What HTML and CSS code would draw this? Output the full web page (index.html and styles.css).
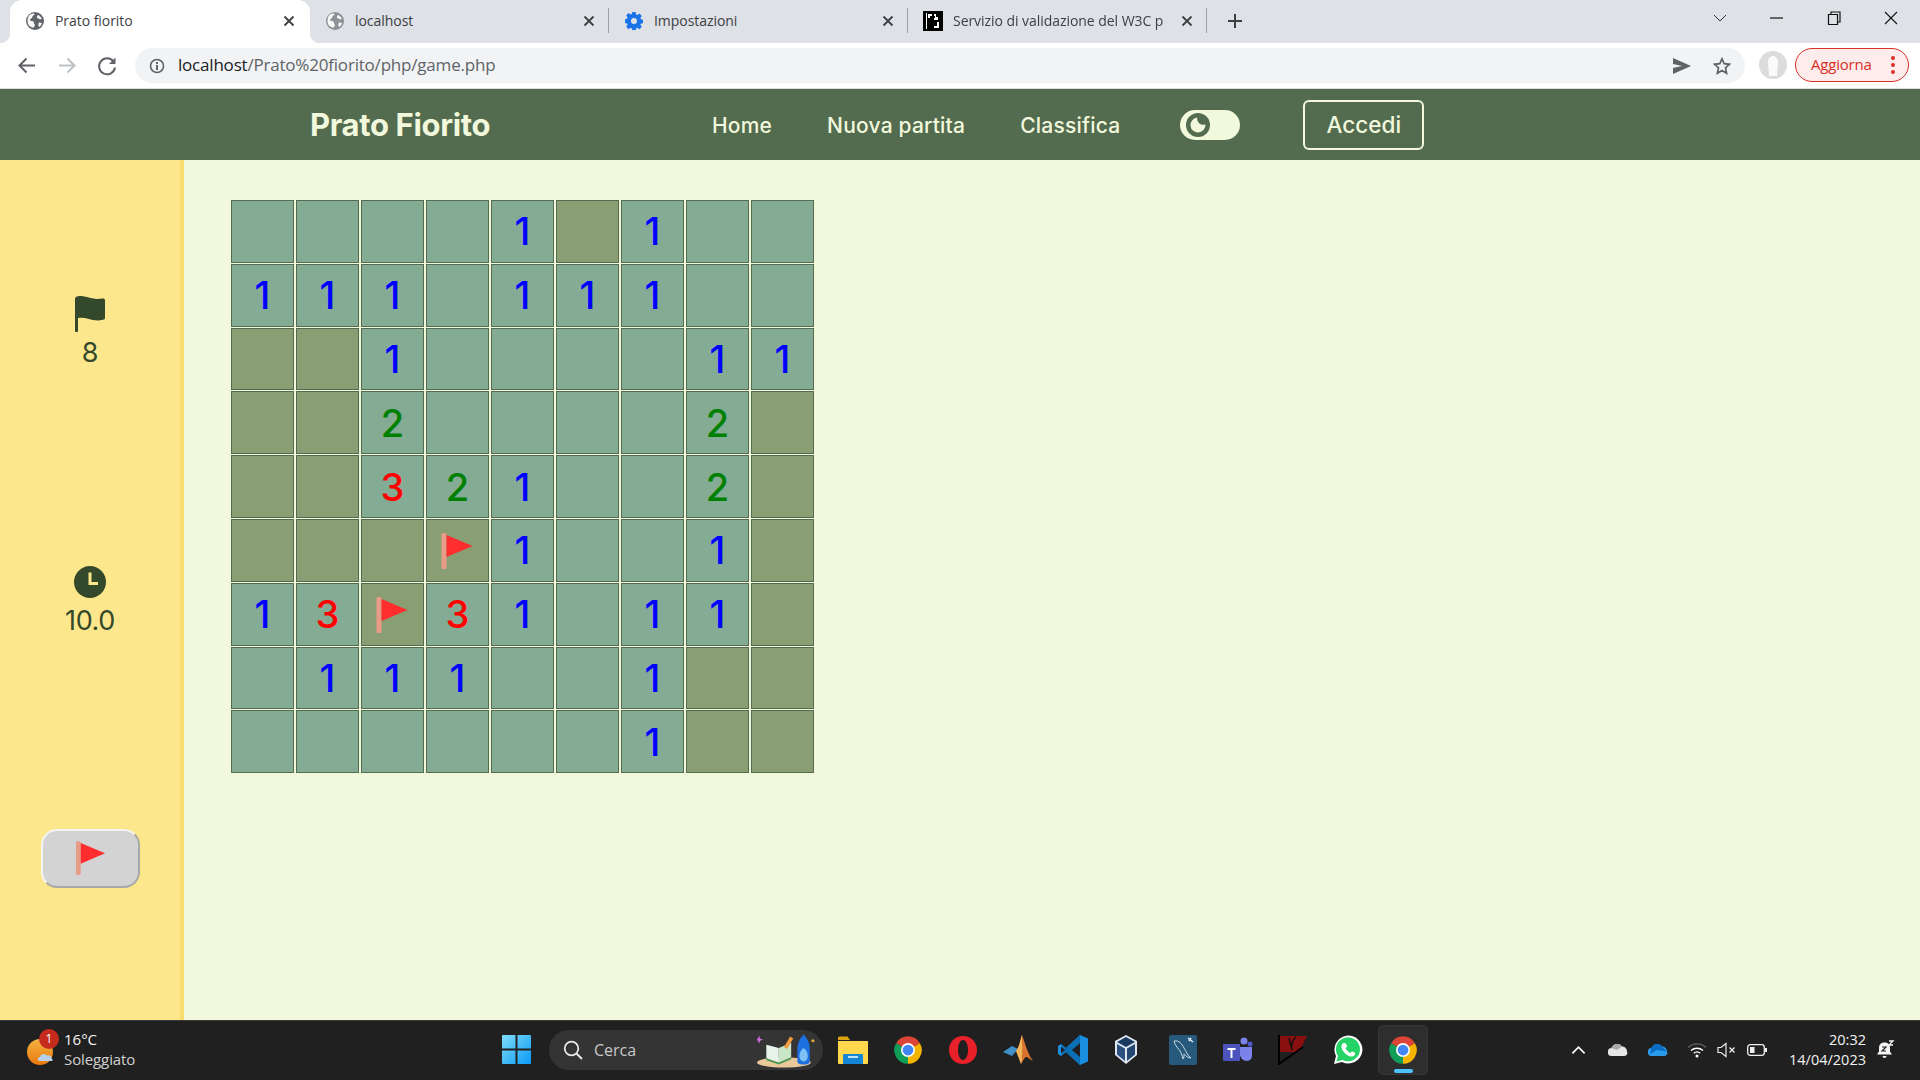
FILE: index.html
```html
<!DOCTYPE html>
<html lang="it">
<head>
<meta charset="utf-8">
<title>Prato fiorito</title>
<link rel="stylesheet" href="styles.css">
</head>
<body>
<svg class="defs" width="0" height="0" aria-hidden="true">
  <defs>
    <symbol id="globe" viewBox="0 0 18 18"><circle cx="9" cy="9" r="9"/><path fill="#fff" fill-opacity=".95" d="M3 3.500c1.500-1.500 3.500-2 5.500-2 0 1.200-.8 2-1.800 2.500-.5.8-.2 1.600-1 2.200-.8.600-1.700.6-1.700 1.500 0 1 1.300 1.300 2.300 1.300 1 .1 1.500.8 1.500 1.600 0 1 1 1.400 1 2.300 0 .9-.4 1.500-1 2.600C4 15.500 1.500 12.800 1.500 9c0-2 .5-4 1.500-5.500zM12 3c1.500.5 3 2 3.800 4-1 .5-2.300.2-3-.3-.8-.6-1.500-.4-1.800-1.200-.2-1 .3-1.800 1-2.500zM13.500 10.500c1 0 1.800.2 2.500.5-.4 1.800-1.400 3.200-2.800 4-.7-.8-1-1.800-.7-3 .1-.8.2-1.500 1-1.500z"/></symbol>
    <symbol id="close" viewBox="0 0 12 12"><path d="M1.500 1.500l9 9M10.500 1.500l-9 9" fill="none" stroke="currentColor" stroke-width="1.800"/></symbol>
    <symbol id="pennant" viewBox="0 0 32 36"><rect x="0" y="0" width="5" height="36" rx="1.500" fill="#e89c88"/><path d="M5 2l26 11L5 24z" fill="#ff2d2d"/></symbol>
    <symbol id="chrome" viewBox="0 0 24 24"><path fill="#db4437" d="M12 12L21.530 6.500A11 11 0 0 0 2.470 6.500z"/><path fill="#f4b400" d="M12 12L12 23A11 11 0 0 0 21.530 6.500z"/><path fill="#0f9d58" d="M12 12L2.470 6.500A11 11 0 0 0 12 23z"/><circle cx="12" cy="12" r="5.600" fill="#fff"/><circle cx="12" cy="12" r="4.300" fill="#4285f4"/></symbol>
  </defs>
</svg>

<div class="tabstrip">
  <div class="tab tab-active">
    <svg class="tab-icon globe-dark"><use href="#globe"/></svg>
    <span class="tab-title">Prato fiorito</span>
    <svg class="tab-close"><use href="#close"/></svg>
  </div>
  <div class="tab">
    <svg class="tab-icon globe-light"><use href="#globe"/></svg>
    <span class="tab-title">localhost</span>
    <svg class="tab-close"><use href="#close"/></svg>
  </div>
  <span class="tab-sep"></span>
  <div class="tab">
    <svg class="tab-icon" viewBox="0 0 18 18"><path fill="#1a73e8" fill-rule="evenodd" d="M7.300 0h3.400l.4 2.400 1.300.6 2-1.400 2.400 2.400-1.400 2 .6 1.300 2.400.4v3.400l-2.400.4-.6 1.300 1.400 2-2.400 2.400-2-1.400-1.300.6-.4 2.400H7.300l-.4-2.400-1.300-.6-2 1.400-2.400-2.400 1.400-2-.6-1.300L-.4 10.800V7.200l2.400-.4.6-1.300-1.400-2 2.400-2.400 2 1.400 1.300-.6zM9 6a3 3 0 1 0 0 6 3 3 0 0 0 0-6z"/></svg>
    <span class="tab-title">Impostazioni</span>
    <svg class="tab-close"><use href="#close"/></svg>
  </div>
  <span class="tab-sep"></span>
  <div class="tab">
    <svg class="tab-icon tab-icon-w3c" viewBox="0 0 20 20"><rect width="20" height="20" fill="#000"/><path fill="#fff" d="M5 3h4v2H7v2H5zM11 3h2v3h2v3h-4V7h1V5h-1zM14 11h2v6h-5v-2h3z"/><path fill="#fff" d="M3 2h1v16H3z"/></svg>
    <span class="tab-title tab-title-fade">Servizio di validazione del W3C p</span>
    <svg class="tab-close"><use href="#close"/></svg>
  </div>
  <span class="tab-sep"></span>
  <svg class="new-tab" viewBox="0 0 16 16"><path d="M8 1v14M1 8h14" stroke="#3c4043" stroke-width="2" fill="none"/></svg>
  <div class="win-controls">
    <svg class="win-ctl" viewBox="0 0 14 14"><path d="M1 4l6 6 6-6" fill="none" stroke="#333" stroke-width="1"/></svg>
    <svg class="win-ctl" viewBox="0 0 14 14"><path d="M0 7h13" stroke="#111" stroke-width="1.200"/></svg>
    <svg class="win-ctl" viewBox="0 0 14 14"><path d="M1.500 3.500h9v10h-9zM4 3.500V1h9v10h-2.500" fill="none" stroke="#111" stroke-width="1.200"/></svg>
    <svg class="win-ctl" viewBox="0 0 14 14"><path d="M1 1l12 12M13 1L1 13" stroke="#111" stroke-width="1.100"/></svg>
  </div>
</div>

<div class="toolbar">
  <svg class="tool-btn" viewBox="0 0 40 20"><path d="M28 10H13M19.500 3L12.500 10l7 7" fill="none" stroke="#5f6368" stroke-width="2"/></svg>
  <svg class="tool-btn" viewBox="0 0 40 20"><path d="M12 10h15M20.500 3l7 7-7 7" fill="none" stroke="#bdc1c6" stroke-width="2"/></svg>
  <svg class="tool-btn" viewBox="0 0 40 20"><path d="M26.500 6A8 8 0 1 0 28 12" fill="none" stroke="#5f6368" stroke-width="2"/><path d="M28.500 2v6.500H22z" fill="#5f6368"/></svg>
  <div class="omnibox">
    <svg class="info" viewBox="0 0 16 16"><circle cx="8" cy="8" r="6.500" fill="none" stroke="#5f6368" stroke-width="1.600"/><path d="M7 4h2v2H7zM7 7h2v5H7z" fill="#5f6368"/></svg>
    <span class="url"><span class="url-host">localhost</span>/Prato%20fiorito/php/game.php</span>
    <svg class="omni-icon send" viewBox="0 0 18 18"><path d="M0 1l18 8-18 8 0-6 9-2-9-2z" fill="#5f6368"/></svg>
    <svg class="omni-icon star" viewBox="0 0 18 18"><path d="M9 1.800l2.200 4.900 5.300.6-4 3.600 1.100 5.300L9 13.500l-4.600 2.700 1.100-5.300-4-3.600 5.300-.6z" fill="none" stroke="#5f6368" stroke-width="1.700"/></svg>
  </div>
  <svg class="avatar" viewBox="0 0 28 28"><circle cx="14" cy="14" r="14" fill="#dcdcdc"/><path d="M9 12c0-5 2.500-7 5-7s5 2 5 7c0 5-1 9-1 13h-8c0-4-1-8-1-13z" fill="#fafafa"/></svg>
  <div class="update-pill"><span class="update-text">Aggiorna</span><span class="update-dots"><i></i><i></i><i></i></span></div>
</div>

<header class="site-header">
  <div class="logo">Prato Fiorito</div>
  <nav class="nav">
    <a class="nav-link">Home</a>
    <a class="nav-link">Nuova partita</a>
    <a class="nav-link">Classifica</a>
  </nav>
  <div class="toggle">
    <svg class="toggle-knob" viewBox="0 0 24 24"><circle cx="12" cy="12" r="12" fill="#536b4f"/><path d="M12 4.500a7.500 7.500 0 1 0 7.500 7.500 6 6 0 0 1-7.500-7.500z" fill="#f2f8dc" transform="rotate(-5 12 12)"/></svg>
  </div>
  <a class="login">Accedi</a>
</header>

<div class="page">
  <aside class="sidebar">
    <div class="stat stat-flags">
      <svg class="stat-flag" viewBox="0 0 30 36"><path fill="#34492b" d="M0 3c0-1.500 1-2.500 2-2.500 3-1 6-.5 10 .6 5 1.300 9 2.500 15 1.400 1.500-.3 3 .3 3 1.500v18c0 1-1 1.600-2 1.800-6 1.300-10 .2-15-1.100-3.500-.9-7-1.300-10-.6V35c0 .6-.5 1-1 1H1c-.6 0-1-.4-1-1z"/></svg>
      <div class="stat-value">8</div>
    </div>
    <div class="stat stat-time">
      <svg class="stat-clock" viewBox="0 0 32 32"><circle cx="16" cy="16" r="16" fill="#34492b"/><path d="M16 6.500v11h8" fill="none" stroke="#fde78d" stroke-width="3"/></svg>
      <div class="stat-value stat-value-time">10.0</div>
    </div>
    <button class="flag-btn"><svg class="flag-btn-icon"><use href="#pennant"/></svg></button>
  </aside>

  <main class="board-area">
    <div class="board">
      <div class="cell"></div><div class="cell"></div><div class="cell"></div><div class="cell"></div><div class="cell n1">1</div><div class="cell hidden"></div><div class="cell n1">1</div><div class="cell"></div><div class="cell"></div>
      <div class="cell n1">1</div><div class="cell n1">1</div><div class="cell n1">1</div><div class="cell"></div><div class="cell n1">1</div><div class="cell n1">1</div><div class="cell n1">1</div><div class="cell"></div><div class="cell"></div>
      <div class="cell hidden"></div><div class="cell hidden"></div><div class="cell n1">1</div><div class="cell"></div><div class="cell"></div><div class="cell"></div><div class="cell"></div><div class="cell n1">1</div><div class="cell n1">1</div>
      <div class="cell hidden"></div><div class="cell hidden"></div><div class="cell n2">2</div><div class="cell"></div><div class="cell"></div><div class="cell"></div><div class="cell"></div><div class="cell n2">2</div><div class="cell hidden"></div>
      <div class="cell hidden"></div><div class="cell hidden"></div><div class="cell n3">3</div><div class="cell n2">2</div><div class="cell n1">1</div><div class="cell"></div><div class="cell"></div><div class="cell n2">2</div><div class="cell hidden"></div>
      <div class="cell hidden"></div><div class="cell hidden"></div><div class="cell hidden"></div><div class="cell hidden"><svg class="cell-flag"><use href="#pennant"/></svg></div><div class="cell n1">1</div><div class="cell"></div><div class="cell"></div><div class="cell n1">1</div><div class="cell hidden"></div>
      <div class="cell n1">1</div><div class="cell n3">3</div><div class="cell hidden"><svg class="cell-flag"><use href="#pennant"/></svg></div><div class="cell n3">3</div><div class="cell n1">1</div><div class="cell"></div><div class="cell n1">1</div><div class="cell n1">1</div><div class="cell hidden"></div>
      <div class="cell"></div><div class="cell n1">1</div><div class="cell n1">1</div><div class="cell n1">1</div><div class="cell"></div><div class="cell"></div><div class="cell n1">1</div><div class="cell hidden"></div><div class="cell hidden"></div>
      <div class="cell"></div><div class="cell"></div><div class="cell"></div><div class="cell"></div><div class="cell"></div><div class="cell"></div><div class="cell n1">1</div><div class="cell hidden"></div><div class="cell hidden"></div>
    </div>
  </main>
</div>

<footer class="taskbar">
  <div class="weather">
    <div class="weather-icon">
      <svg class="weather-svg" viewBox="0 0 30 30"><defs><linearGradient id="sun" x1="0" y1="0" x2="0" y2="1"><stop offset="0" stop-color="#f5b342"/><stop offset="1" stop-color="#e8780f"/></linearGradient></defs><circle cx="13" cy="15" r="13" fill="url(#sun)"/><path d="M13 24c-3 0-3-4 0-4 .5-3 5-4 6.500-1.500 3-1 5.500 1 5 3 2 1 1.500 2.500-.5 2.500z" fill="#b7cfe8"/></svg>
      <span class="weather-badge">1</span>
    </div>
    <div class="weather-text"><span class="weather-temp">16°C</span><span class="weather-desc">Soleggiato</span></div>
  </div>

  <svg class="start" viewBox="0 0 29 29"><defs><linearGradient id="win" x1="0" y1="0" x2="1" y2="1"><stop offset="0" stop-color="#7fdcf9"/><stop offset="1" stop-color="#0a9bf5"/></linearGradient></defs><path fill="url(#win)" d="M0 1a1 1 0 0 1 1-1h12.500v13.500H0zM15.500 0H28a1 1 0 0 1 1 1v12.500H15.500zM0 15.500h13.500V29H1a1 1 0 0 1-1-1zM15.500 15.500H29V28a1 1 0 0 1-1 1H15.500z"/></svg>

  <div class="search">
    <svg class="search-glass" viewBox="0 0 20 20"><circle cx="8.500" cy="8.500" r="6.800" fill="none" stroke="#e8e8e8" stroke-width="1.800"/><path d="M13.500 13.500l5.500 5.500" stroke="#e8e8e8" stroke-width="2"/></svg>
    <span class="search-text">Cerca</span>
    <svg class="search-art" viewBox="0 0 56 34"><ellipse cx="26" cy="29" rx="26" ry="5" fill="#e9c899"/><path d="M9 12l12 3v14l-12-4z" fill="#e8f3ea"/><path d="M21 15l12-5v14l-12 5z" fill="#c9e6c8"/><path d="M9 25l12 4 12-5v2l-12 5-12-4z" fill="#4c9a5b"/><path d="M26 14l6-10 3 2-6 10z" fill="#f09a3e"/><path d="M45 2c-3 3-6 8-6 14v12c0 2 2 3 6 3s6-1 6-3V16c0-6-3-11-6-14z" fill="#1e6fe0"/><path d="M45 15c-3 2-4 5-4 8 0 3 2 5 4 5s4-2 4-5c0-3-1-6-4-8z" fill="#7ec1f5"/><path d="M2 3l1 3 3 1-3 1-1 3-1-3-3-1 3-1z" fill="#c86ad8"/><circle cx="54" cy="8" r="1.500" fill="#e8b03a"/></svg>
  </div>

  <div class="apps">
    <div class="app"><svg class="app-icon" viewBox="0 0 30 30"><path d="M0 3a1.500 1.500 0 0 1 1.500-1.500h8L12 5h-12z" fill="#e0a40d"/><path d="M0 6h30v22a1 1 0 0 1-1 1H1a1 1 0 0 1-1-1z" fill="#ffd84d"/><path d="M6 19h18a1 1 0 0 1 1 1v9H5v-9a1 1 0 0 1 1-1z" fill="#1585d6"/><rect x="10" y="21" width="10" height="2" fill="#bfe3f7"/></svg></div>
    <div class="app"><svg class="app-icon"><use href="#chrome"/></svg></div>
    <div class="app"><svg class="app-icon" viewBox="0 0 30 30"><path fill="#e8202a" fill-rule="evenodd" d="M15 1c8 0 14 6 14 14s-6 14-14 14S1 23 1 15 7 1 15 1zm0 4c-3 0-5 4.500-5 10s2 10 5 10 5-4.500 5-10-2-10-5-10z"/></svg></div>
    <div class="app"><svg class="app-icon" viewBox="0 0 30 30"><path d="M0 17l9-6 6 3-6 7z" fill="#3f8fc9"/><path d="M19 0c2 5 6 20 11 26-4-2-5-4-7-4-2 1-3 4-5 7-1-4-2-9-5-13 3-3 4-10 6-16z" fill="#d9722c"/><path d="M19 0c-2 6-3 13-6 16l5 13c2-3 1-20 1-29z" fill="#f2b45a"/></svg></div>
    <div class="app"><svg class="app-icon" viewBox="0 0 30 30"><path d="M22 0l8 3.500v23L22 30 8 17l-5 4-3-2v-8l3-2 5 4z" fill="#1a8fe0"/><path d="M22 0v30l-14-13-5 4 3-6-3-6 5 4z" fill="#0b6fb5"/><path d="M22 8l-8 7 8 7z" fill="#202020"/><path d="M3 11.500L7 15l-4 3.500z" fill="#202020"/></svg></div>
    <div class="app app-vbox"><svg class="app-icon" viewBox="0 0 30 30"><path d="M15 0l11 6v14l-11 9-11-9V6z" fill="#dfe7f1"/><path d="M15 2l9 5-9 5-9-5z" fill="#183a61"/><path d="M6 9l8 4.500V26l-8-6.500z" fill="#2a517e"/><path d="M24 9l-8 4.500V26l8-6.500z" fill="#224770"/></svg></div>
    <div class="app"><svg class="app-icon" viewBox="0 0 30 30"><rect x="1" y="0" width="28" height="30" rx="2" fill="#26597c"/><path d="M6 6c5-1 8 3 10 7 2 3 3 7 7 10-3 0-5-2-7-4 0 2 0 4-1 5-1-3-1-5-3-8-1-2-5-5-6-10z" fill="none" stroke="#c9dbe6" stroke-width="1"/><path d="M20 3l5 4M23 3l-2 3" stroke="#e6eef3" stroke-width="1.500"/></svg></div>
    <div class="app"><svg class="app-icon" viewBox="0 0 30 30"><circle cx="21" cy="6" r="3.500" fill="#7b83eb"/><circle cx="27" cy="9" r="2.500" fill="#5059c9"/><path d="M17 12h12v9a5 5 0 0 1-5 5c-4 0-7-3-7-7z" fill="#7b83eb"/><path d="M1 9h15a1 1 0 0 1 1 1v15a1 1 0 0 1-1 1H1a1 1 0 0 1-1-1V10a1 1 0 0 1 1-1z" fill="#4b53bc"/><path d="M4.500 13h8v2H9.500v8h-2v-8H4.500z" fill="#fff"/></svg></div>
    <div class="app"><svg class="app-icon" viewBox="0 0 30 30"><path d="M1 1h28l-8 16H1z" fill="#8a0f0f"/><path d="M1 0v29l24-17" fill="none" stroke="#000" stroke-width="2"/><path d="M11 3l3 12M18 2c-4 3-5 9-4 13" fill="none" stroke="#111" stroke-width="1.500"/></svg></div>
    <div class="app"><svg class="app-icon" viewBox="0 0 30 30"><path d="M1 29l2-8A14 14 0 1 1 9 27z" fill="#fff"/><path d="M3.500 26.500l1.500-5.500A12 12 0 1 1 9.500 25z" fill="#25d366"/><path d="M10.500 8c-1 .5-2.500 2-2 4.500 1 4 5 8 9 9 2.500.5 4-1 4.500-2 .2-.6.2-1.400 0-1.700l-3-1.500-1.500 1.800c-2-.7-4-2.700-5-5l1.600-1.500-1.200-3c-.5-.6-1.700-.8-2.400-.6z" fill="#fff"/></svg></div>
    <div class="app app-active"><svg class="app-icon"><use href="#chrome"/></svg><span class="app-indicator"></span></div>
  </div>

  <div class="tray">
    <svg class="tray-icon caret" viewBox="0 0 16 10"><path d="M1.500 8.500L8 2l6.500 6.500" fill="none" stroke="#fff" stroke-width="1.800"/></svg>
    <svg class="tray-icon cloud" viewBox="0 0 20 13"><path d="M4 13a4 4 0 0 1-.5-8A6 6 0 0 1 14 3.500 4.800 4.800 0 0 1 19 8.500c1 2 0 4.500-3 4.500z" fill="#e6e6e6"/><path d="M3.500 5A6 6 0 0 1 14 3.500L9 7z" fill="#a8a8a8"/></svg>
    <svg class="tray-icon cloud cloud-blue" viewBox="0 0 20 13"><path d="M4 13a4 4 0 0 1-.5-8A6 6 0 0 1 14 3.500 4.800 4.800 0 0 1 19 8.500c1 2 0 4.500-3 4.500z" fill="#2a9be8"/><path d="M3.500 5A6 6 0 0 1 14 3.500L19 8.500 9 7 2 11z" fill="#0a6cc4"/></svg>
    <svg class="tray-icon wifi" viewBox="0 0 20 16"><path d="M1 5.500a13 13 0 0 1 18 0" fill="none" stroke="#666" stroke-width="1.300"/><path d="M4 8.500a9 9 0 0 1 12 0M6.800 11.200a5 5 0 0 1 6.400 0" fill="none" stroke="#fff" stroke-width="1.400"/><circle cx="10" cy="14" r="1.500" fill="#fff"/></svg>
    <svg class="tray-icon speaker" viewBox="0 0 20 16"><path d="M1 5.500h3L9 1.500v13l-5-4H1z" fill="none" stroke="#eee" stroke-width="1.200"/><path d="M12.500 5.500l5 5M17.500 5.500l-5 5" stroke="#eee" stroke-width="1.300"/></svg>
    <svg class="tray-icon battery" viewBox="0 0 20 12"><rect x=".7" y=".7" width="16.600" height="10.600" rx="2.500" fill="none" stroke="#eee" stroke-width="1.300"/><rect x="3" y="3" width="4.500" height="6" fill="#eee"/><rect x="18" y="4" width="2" height="4" fill="#eee"/></svg>
    <div class="clock"><span>20:32</span><span>14/04/2023</span></div>
    <svg class="tray-icon bell" viewBox="0 0 18 20"><path d="M7.500 2.500a5 5 0 0 1 5.500 5v4l2 3H0l2-3v-4a5 5 0 0 1 5.500-5z" fill="#f4f4f4"/><path d="M5.500 16h4a2 2 0 0 1-4 0z" fill="#f4f4f4"/><path d="M5 7h4l-4 4h4" fill="none" stroke="#202020" stroke-width="1.200"/><path d="M12 1h4l-4 4h4" fill="none" stroke="#f4f4f4" stroke-width="1.300"/></svg>
  </div>
</footer>
</body>
</html>
```
FILE: styles.css
```css
* { box-sizing: border-box; }
html, body { margin: 0; padding: 0; width: 1920px; height: 1080px; overflow: hidden; }
body { display: flex; flex-direction: column; font-family: "Inter", "Liberation Sans", sans-serif; background: #f2f8dc; }
.defs { position: absolute; }

/* browser tab strip */
.tabstrip { height: 43px; flex: none; background: #dee1e6; display: flex; align-items: center; padding-left: 10px; font-family: "Open Sans", "Liberation Sans", sans-serif; }
.tab { width: 298px; height: 43px; display: flex; align-items: center; padding: 0 13px 0 16px; flex: none; color: #3c4043; position: relative; }
.tab-active { width: 300px; background: #fff; border-radius: 12px 12px 0 0; padding-right: 15px; }
.tab-active::before, .tab-active::after { content: ""; position: absolute; bottom: 0; width: 10px; height: 10px; }
.tab-active::before { left: -10px; background: radial-gradient(circle at 0 0, #dee1e6 10px, #fff 10.500px); }
.tab-active::after { right: -10px; background: radial-gradient(circle at 100% 0, #dee1e6 10px, #fff 10.500px); }
.tab-icon { width: 18px; height: 18px; flex: none; margin-top: -2px; }
.tab-icon-w3c { width: 20px; height: 20px; margin-left: -1px; margin-right: -1px; }
.globe-dark { fill: #5f6368; }
.globe-light { fill: #8e9196; }
.tab-title { flex: 1; min-width: 0; margin-left: 11px; padding-bottom: 3px; font-size: 14px; white-space: nowrap; letter-spacing: -.05px; }
.tab-title-fade { -webkit-mask-image: linear-gradient(90deg, #000 92%, transparent 100%); mask-image: linear-gradient(90deg, #000 92%, transparent 100%); }
.tab-close { width: 12px; height: 12px; flex: none; color: #3c4043; margin-top: -2px; }
.tab-sep { width: 1px; height: 25px; background: #9aa0a6; flex: none; margin-top: -2px; }
.new-tab { width: 16px; height: 16px; margin-left: 20px; margin-top: -2px; flex: none; }
.win-controls { margin-left: auto; display: flex; align-items: center; align-self: flex-start; height: 36px; padding-right: 22px; gap: 43px; }
.win-ctl { width: 14px; height: 14px; flex: none; }

/* browser toolbar */
.toolbar { height: 46px; flex: none; background: #fff; border-bottom: 1px solid #dadce0; display: flex; align-items: flex-start; padding: 5px 11px 0 7px; }
.tool-btn { width: 40px; height: 35px; flex: none; }
.omnibox { width: 1610px; height: 35px; margin-left: 8px; background: #f1f3f4; border-radius: 18px; display: flex; align-items: center; padding: 0 14px 0 14px; flex: none; font-family: "Open Sans", "Liberation Sans", sans-serif; }
.info { width: 16px; height: 16px; flex: none; }
.url { margin-left: 13px; padding-bottom: 2px; font-size: 17px; color: #5f6368; flex: 1; letter-spacing: -.2px; }
.url-host { color: #202124; }
.omni-icon { width: 18px; height: 18px; flex: none; }
.send { margin-right: 22px; }
.avatar { width: 28px; height: 28px; margin: 3px 0 0 14px; flex: none; }
.update-pill { width: 114px; height: 34px; margin-left: 8px; border: 1px solid #d93025; background: #fcecec; border-radius: 17px; display: flex; align-items: center; padding: 0 13px 0 15px; justify-content: space-between; flex: none; font-family: "Open Sans", "Liberation Sans", sans-serif; }
.update-text { font-size: 15px; color: #d93025; letter-spacing: -.2px; padding-bottom: 2px; }
.update-dots { display: flex; flex-direction: column; gap: 3px; }
.update-dots i { width: 4px; height: 4px; border-radius: 50%; background: #d93025; display: block; }

/* site header */
.site-header { height: 71px; flex: none; background: #536b4f; display: flex; align-items: center; padding-left: 310px; color: #f2f8dc; }
.logo { width: 402px; font-size: 31px; font-weight: 700; letter-spacing: -.35px; flex: none; }
.nav { display: flex; gap: 55px; flex: none; padding-top: 1px; }
.nav-link { font-size: 21px; font-weight: 500; letter-spacing: .2px; }
.toggle { width: 60px; height: 30px; margin-left: 60px; background: #f2f8dc; border-radius: 15px; display: flex; align-items: center; padding-left: 6px; flex: none; }
.toggle-knob { width: 24px; height: 24px; }
.login { width: 121px; height: 50px; margin-left: 63px; border: 2px solid #f2f8dc; border-radius: 6px; display: flex; align-items: center; justify-content: center; font-size: 22.500px; font-weight: 500; flex: none; }

/* game page */
.page { flex: 1; min-height: 0; display: flex; }
.sidebar { width: 184px; flex: none; background: #fde78d; border-right: 4px solid #f9dc6e; display: flex; flex-direction: column; align-items: center; padding-top: 136px; color: #34492b; }
.stat { display: flex; flex-direction: column; align-items: center; }
.stat-flags { height: 270px; }
.stat-time { height: 263px; }
.stat-flag { width: 30px; height: 36px; }
.stat-clock { width: 32px; height: 32px; }
.stat-value { font-size: 27px; line-height: 36px; margin-top: 3px; letter-spacing: -.4px; }
.stat-value-time { margin-top: 5px; }
.flag-btn { width: 99px; height: 59px; padding: 0; border: 2px solid; border-color: #f4f4f4 #a8a8a8 #a8a8a8 #f4f4f4; border-radius: 16px; background: #d3d3d3; display: flex; align-items: center; justify-content: center; }
.flag-btn-icon { width: 30px; height: 34px; margin-left: 2px; margin-top: -2px; }
.board-area { flex: 1; padding: 40px 0 0 47px; }
.board { display: grid; grid-template-columns: repeat(9, 63px); grid-auto-rows: 62.800px; column-gap: 2px; row-gap: 1px; }
.cell { border: 1px solid #536b4f; background: #84ab94; display: flex; align-items: center; justify-content: center; font-size: 38px; font-weight: 500; line-height: 1; }
.hidden { background: #8a9e73; }
.n1 { color: #0000ff; }
.n2 { color: #008000; }
.n3 { color: #ff0000; }
.cell-flag { width: 33px; height: 36px; margin-top: 2px; }

/* windows taskbar */
.taskbar { height: 60px; flex: none; background: #202020; border-top: 1px solid #3b3b3b; display: flex; align-items: center; padding-bottom: 2px; color: #f2f2f2; font-family: "Open Sans", "Liberation Sans", sans-serif; }
.weather { width: 502px; flex: none; display: flex; align-items: center; padding-left: 26px; }
.weather-icon { width: 38px; height: 38px; position: relative; flex: none; margin-top: 2px; }
.weather-svg { width: 30px; height: 30px; position: absolute; left: 1px; top: 5px; }
.weather-badge { position: absolute; left: 13px; top: -3px; width: 20px; height: 20px; border-radius: 50%; background: #c42b1c; color: #fff; font-size: 12px; display: flex; align-items: center; justify-content: center; }
.weather-text { display: flex; flex-direction: column; font-size: 15px; line-height: 20px; margin-top: -2px; }
.weather-desc { color: #d0d0d0; letter-spacing: -.1px; }
.start { width: 29px; height: 29px; flex: none; }
.search { width: 274px; height: 40px; margin-left: 18px; border-radius: 20px; background: #343434; display: flex; align-items: center; padding-left: 14px; flex: none; }
.search-glass { width: 20px; height: 20px; flex: none; }
.search-text { margin-left: 11px; font-size: 16px; color: #c8c8c8; }
.search-art { width: 58px; height: 36px; margin-left: auto; margin-right: 8px; flex: none; }
.apps { display: flex; flex: none; margin-left: 2px; }
.app { width: 55px; height: 50px; display: flex; align-items: center; justify-content: center; flex: none; position: relative; }
.app-icon { width: 30px; height: 30px; }
.app-vbox { padding-right: 4px; }
.app-active { width: 50px; margin-left: 3px; background: #2e2e2e; border-radius: 5px; border: 1px solid #363636; }
.app-indicator { position: absolute; bottom: 1px; left: 15px; width: 19px; height: 4px; border-radius: 2px; background: #4cc2ff; }
.tray { margin-left: auto; display: flex; align-items: center; padding-right: 25px; }
.tray-icon { flex: none; }
.caret { width: 15px; height: 10px; margin-right: 22px; }
.cloud { width: 20px; height: 13px; margin-right: 20px; }
.cloud-blue { margin-right: 19px; }
.wifi { width: 20px; height: 16px; margin-right: 10px; }
.speaker { width: 20px; height: 16px; margin-right: 10px; }
.battery { width: 20px; height: 12px; }
.clock { width: 99px; display: flex; flex-direction: column; align-items: flex-end; font-size: 14.500px; line-height: 20px; }
.bell { width: 18px; height: 20px; margin-left: 11px; }
```
